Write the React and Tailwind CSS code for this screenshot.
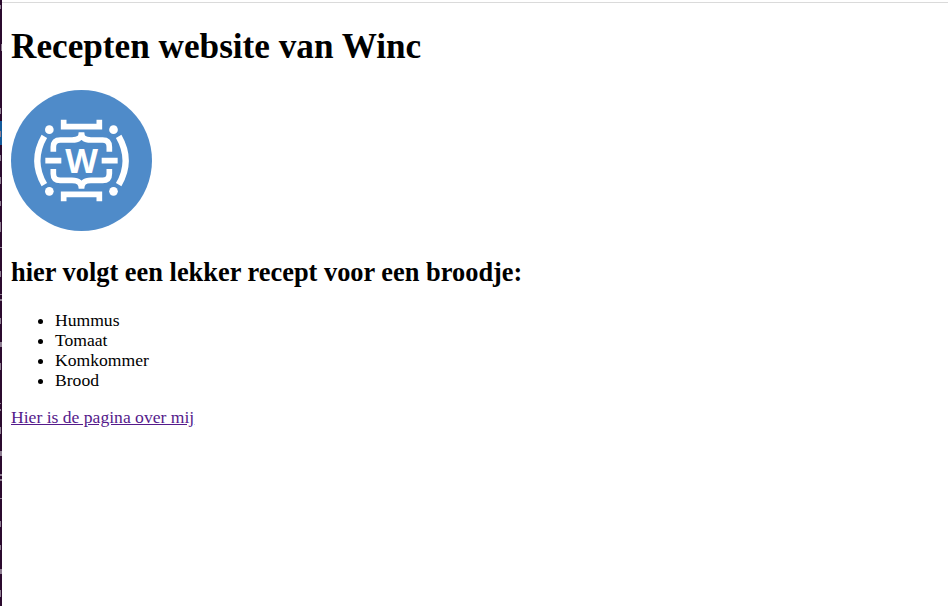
const ingredients = ["Hummus", "Tomaat", "Komkommer", "Brood"];

// [y, height, x, width] of the glyph edges visible along the neighbouring window
const edgeMarks = [
  [5, 4, 0, 1], [44, 7, 1, 1], [108, 6, 0, 1], [131, 6, 0, 1], [155, 6, 0, 1],
  [177, 7, 0, 1], [201, 5, 0, 1], [222, 10, 0, 1], [247, 1, 0, 2], [271, 6, 0, 1],
  [294, 1, 0, 2], [299, 2, 0, 2], [318, 6, 0, 1], [342, 5, 0, 2], [363, 7, 0, 1],
  [403, 1, 0, 1], [409, 2, 0, 1], [427, 7, 0, 1], [451, 5, 0, 2], [474, 2, 0, 2],
  [479, 2, 0, 2], [498, 1, 0, 2], [521, 6, 0, 1], [545, 5, 0, 1], [569, 5, 0, 2],
  [590, 7, 0, 1],
];

function WindowEdge() {
  return (
    <svg className="h-[606px] w-[2px] shrink-0 bg-[#2b0a2e]" viewBox="0 0 2 606" aria-hidden="true">
      <rect x="0" y="121" width="2" height="24" fill="#135b9b" />
      {edgeMarks.map(([y, h, x, w]) => (
        <rect key={y} x={x} y={y} width={w} height={h} fill="#8d7d91" />
      ))}
    </svg>
  );
}

function Logo() {
  return (
    <svg className="block size-[141px]" viewBox="33 30 423 423" role="img" aria-label="Winc">
      <circle cx="244.5" cy="241.5" r="211.5" fill="#4f8bc9" />
      <g fill="none" stroke="#fff" strokeWidth="17">
        <path d="M191 119V140H298V119" />
        <path d="M191 364V343H298V364" />
        <path d="M133 169Q91 242 133 314" strokeWidth="19" />
        <path d="M356 169Q398 242 356 314" strokeWidth="19" />
        <path d="M136 242H184M305 242H353" />
        <path d="M160 215V201Q160 180 181 180H216C236 180 244 174 244.500 157C245 174 253 180 273 180H308Q328 180 328 201V215" />
        <path d="M160 267V281Q160 301 181 301H216C236 301 244 308 244.500 326C245 308 253 301 273 301H308Q328 301 328 281V267" />
      </g>
      <text
        x="244.5"
        y="278"
        textAnchor="middle"
        textLength="98"
        lengthAdjust="spacingAndGlyphs"
        fill="#fff"
        className="font-['Open_Sans',sans-serif] text-[102px] font-bold"
      >
        W
      </text>
      <g fill="#fff">
        <circle cx="148" cy="149" r="13" />
        <circle cx="340.500" cy="149" r="13" />
        <circle cx="148" cy="334" r="13" />
        <circle cx="340.500" cy="334" r="13" />
      </g>
    </svg>
  );
}

export default function App() {
  return (
    <div className="flex h-[606px] w-full overflow-hidden bg-white">
      <WindowEdge />
      <main className="flex-1 pl-[9px] font-['Liberation_Serif',serif] text-[17.6px] leading-5 text-black">
        <div className="-ml-[9px] h-[3px] border-b border-[#dadada]" />
        <h1 className="mt-6 text-[35.2px] leading-10 font-bold">Recepten website van Winc</h1>
        <div className="mt-[23px]">
          <Logo />
        </div>
        <h2 className="mt-[26px] text-[26.4px] leading-[30px] font-bold">
          hier volgt een lekker recept voor een broodje:
        </h2>
        <ul className="mt-[23px] list-disc pl-11">
          {ingredients.map((name) => (
            <li key={name}>{name}</li>
          ))}
        </ul>
        <a href="#over-mij" className="mt-[17px] inline-block text-[#551a8b] underline">
          Hier is de pagina over mij
        </a>
      </main>
    </div>
  );
}
